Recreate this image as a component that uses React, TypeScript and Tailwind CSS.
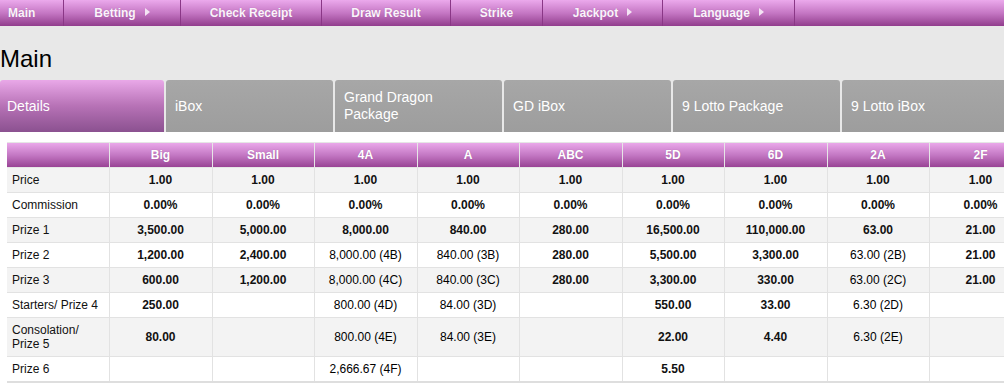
import React from "react";

const navItems = [
  { label: "Main", w: "w-[64px]", arrow: false, left: true },
  { label: "Betting", w: "w-[117px]", arrow: true },
  { label: "Check Receipt", w: "w-[141px]", arrow: false },
  { label: "Draw Result", w: "w-[129px]", arrow: false },
  { label: "Strike", w: "w-[92px]", arrow: false },
  { label: "Jackpot", w: "w-[120px]", arrow: true },
  { label: "Language", w: "w-[132px]", arrow: true },
];

const tabs = [
  { label: "Details", active: true },
  { label: "iBox" },
  { label: "Grand Dragon Package" },
  { label: "GD iBox" },
  { label: "9 Lotto Package" },
  { label: "9 Lotto iBox" },
];

const columns = ["Big", "Small", "4A", "A", "ABC", "5D", "6D", "2A", "2F"];

const rows: { label: string; values: string[] }[] = [
  { label: "Price", values: Array(9).fill("1.00") },
  { label: "Commission", values: Array(9).fill("0.00%") },
  {
    label: "Prize 1",
    values: ["3,500.00", "5,000.00", "8,000.00", "840.00", "280.00", "16,500.00", "110,000.00", "63.00", "21.00"],
  },
  {
    label: "Prize 2",
    values: ["1,200.00", "2,400.00", "8,000.00 (4B)", "840.00 (3B)", "280.00", "5,500.00", "3,300.00", "63.00 (2B)", "21.00"],
  },
  {
    label: "Prize 3",
    values: ["600.00", "1,200.00", "8,000.00 (4C)", "840.00 (3C)", "280.00", "3,300.00", "330.00", "63.00 (2C)", "21.00"],
  },
  {
    label: "Starters/ Prize 4",
    values: ["250.00", "", "800.00 (4D)", "84.00 (3D)", "", "550.00", "33.00", "6.30 (2D)", ""],
  },
  {
    label: "Consolation/ Prize 5",
    values: ["80.00", "", "800.00 (4E)", "84.00 (3E)", "", "22.00", "4.40", "6.30 (2E)", ""],
  },
  {
    label: "Prize 6",
    values: ["", "", "2,666.67 (4F)", "", "", "5.50", "", "", ""],
  },
];

function Arrow() {
  return (
    <svg width="5" height="8" viewBox="0 0 5 8" className="ml-[9px] -mt-[3px]">
      <path d="M0 0 L5 4 L0 8 Z" fill="#f4e4f4" />
    </svg>
  );
}

function TopNav() {
  return (
    <div className="flex h-[26px] bg-linear-to-b from-[#eba9ec] via-[#c577c4] to-[#913d8d]">
      {navItems.map((item) => (
        <div
          key={item.label}
          className={
            item.left
              ? `${item.w} flex items-center pl-[8px] border-r border-[#8a3786]`
              : `${item.w} flex items-center justify-center border-r border-[#8a3786]`
          }
        >
          <span className="text-[12px] font-bold text-[#fbf3fb] [text-shadow:0_0_1px_#a060a0]">
            {item.label}
          </span>
          {item.arrow && <Arrow />}
        </div>
      ))}
    </div>
  );
}

function Tabs() {
  return (
    <div className="flex gap-[2px] pt-[7px]">
      {tabs.map((tab) => (
        <div
          key={tab.label}
          className={
            tab.active
              ? "w-[164px] shrink-0 h-[52px] flex items-center pl-[7px] rounded-t-[3px] bg-linear-to-b from-[#e9a8e8] via-[#b772b6] to-[#8b5190]"
              : "w-[167px] shrink-0 h-[52px] flex items-center pl-[9px] pr-[50px] rounded-t-[3px] bg-linear-to-b from-[#a7a7a7] to-[#9d9d9d]"
          }
        >
          <span className="text-[14px] leading-[17px] text-white">{tab.label}</span>
        </div>
      ))}
    </div>
  );
}

function isPlain(v: string) {
  return !v.includes("(");
}

function PriceTable() {
  return (
    <table className="table-fixed border-collapse w-[1025px] ml-[7px] mt-[10px] text-[12px] leading-[14px] border-b-2 border-b-[#dedede]">
      <colgroup>
        <col className="w-[102px]" />
        {columns.map((c, i) => (
          <col key={c} className={i % 2 === 0 ? "w-[103px]" : "w-[102px]"} />
        ))}
      </colgroup>
      <thead>
        <tr className="bg-linear-to-b from-[#eaa8ea] via-[#c276c2] to-[#953f91]">
          <th className="h-[25px] border border-[#e6e6e6] border-l-0"></th>
          {columns.map((c) => (
            <th
              key={c}
              className="h-[25px] border border-[#e6e6e6] text-center font-bold text-white [text-shadow:0_0_1px_#a060a0]"
            >
              {c}
            </th>
          ))}
        </tr>
      </thead>
      <tbody>
        {rows.map((row, r) => (
          <tr key={row.label} className={r % 2 === 0 ? "bg-[#f3f3f3]" : "bg-white"}>
            <td className="py-[5px] pl-[5px] pr-[8px] border border-[#e2e2e2] border-l-0 text-[#111]">
              {row.label}
            </td>
            {row.values.map((v, i) => (
              <td
                key={i}
                className={
                  isPlain(v)
                    ? "py-[5px] border border-[#e2e2e2] text-center font-bold text-[#111]"
                    : "py-[5px] border border-[#e2e2e2] text-center text-black"
                }
              >
                {v}
              </td>
            ))}
          </tr>
        ))}
      </tbody>
    </table>
  );
}

export default function App() {
  return (
    <div className="w-[1004px] overflow-hidden bg-white font-['Liberation_Sans',Arial,sans-serif]">
      <TopNav />
      <div className="bg-[#e8e8e8] pt-[19px]">
        <h1 className="text-[24px] leading-[28px] text-black">Main</h1>
        <Tabs />
      </div>
      <PriceTable />
      <div className="h-[10px]" />
    </div>
  );
}
